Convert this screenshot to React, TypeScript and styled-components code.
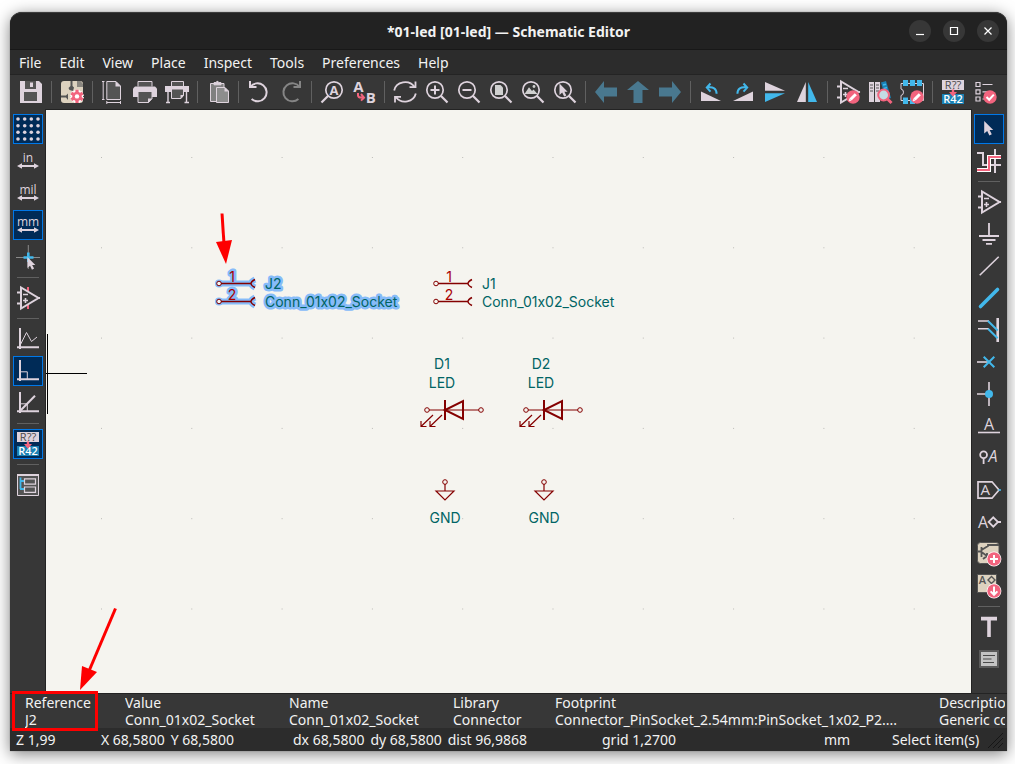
import React from "react";
import styled, { createGlobalStyle, css } from "styled-components";

const c = {
  lilac: "#ded3dd",
  dark: "#545454",
  pink: "#f2647e",
  blue: "#42b8eb",
  deep: "#1a81b4",
  beige: "#ddd2bf",
  arrow: "#49788f",
  wire: "#840000",
  pinText: "#a90000",
  field: "#006464",
  halo: "#86bbf9",
};

const GlobalStyle = createGlobalStyle`
  * { box-sizing: border-box; }
  body {
    margin: 0;
    background: #ffffff;
    font-family: "Noto Sans", "Open Sans", sans-serif;
    font-size: 14px;
    color: #f2f2f2;
  }
`;

/* ---------- window frame ---------- */

const Desktop = styled.div`
  display: flex;
  min-height: 100vh;
  padding: 12px 8px 13px 10px;
  overflow: hidden;
`;

const Window = styled.main`
  flex: 1;
  min-width: 0;
  display: flex;
  flex-direction: column;
  background: #373737;
  border-radius: 12px 12px 0 0;
  box-shadow: 0 0 1px rgba(0, 0, 0, 0.6), 0 3px 16px rgba(0, 0, 0, 0.5);
`;

const TitleBar = styled.header`
  display: grid;
  grid-template-columns: 1fr auto 1fr;
  align-items: center;
  height: 38px;
  padding: 0 8px;
  background: #222222;
  border-top: 1px solid #3c3c3c;
  border-bottom: 1px solid #181818;
  border-radius: 12px 12px 0 0;
`;

const Title = styled.h1`
  grid-column: 2;
  margin: 0;
  font-size: 14px;
  line-height: 22px;
  padding-top: 2px;
  font-weight: 700;
  white-space: nowrap;
`;

const WindowControls = styled.div`
  display: flex;
  justify-content: flex-end;
  gap: 12px;
`;

const RoundButton = styled.button`
  display: grid;
  place-items: center;
  width: 22px;
  height: 22px;
  padding: 0;
  border: 0;
  border-radius: 50%;
  background: #373737;
`;

const MenuBar = styled.nav`
  display: flex;
  align-items: center;
  gap: 18px;
  height: 25px;
  padding: 2px 9px 0;
  background: #2c2c2c;
  border-bottom: 1px solid #242424;
`;

const MenuItem = styled.button`
  padding: 0;
  border: 0;
  background: none;
  color: inherit;
  font: inherit;
  line-height: 20px;
`;

/* ---------- tool bars ---------- */

type Side = "top" | "left" | "right";

const barLayout = {
  top: css`
    height: 34px;
    padding: 1px 5px;
  `,
  left: css`
    flex-direction: column;
    flex: none;
    padding: 4px 1px 0 2px;
  `,
  right: css`
    flex-direction: column;
    flex: none;
    padding: 4px 2px 0 1px;
  `,
};

const ToolBar = styled.div<{ $side: Side }>`
  display: flex;
  ${(p) => barLayout[p.$side]}
`;

const ToolButton = styled.button<{ $active?: boolean }>`
  display: grid;
  place-items: center;
  flex: none;
  width: ${(p) => (p.$active ? 30 : 32)}px;
  height: ${(p) => (p.$active ? 30 : 32)}px;
  margin: ${(p) => (p.$active ? 1 : 0)}px;
  padding: 0;
  border: ${(p) => (p.$active ? "1px solid #0078e8" : "0")};
  background: ${(p) => (p.$active ? "#002b57" : "none")};
`;

const Divider = styled.span<{ $vertical?: boolean }>`
  flex: none;
  align-self: center;
  width: ${(p) => (p.$vertical ? 22 : 1)}px;
  height: ${(p) => (p.$vertical ? 1 : 22)}px;
  margin: ${(p) => (p.$vertical ? "4px 0" : "0 4px")};
  background: #606060;
`;

const IconSvg = styled.svg`
  display: block;
  width: 24px;
  height: 24px;
  overflow: visible;
  fill: none;
  stroke: ${c.lilac};
  stroke-width: 2;
`;

const Glyph = styled.text<{ $size: number; $color?: string; $weight?: number; $italic?: boolean }>`
  font-family: "Open Sans", "Noto Sans", sans-serif;
  font-size: ${(p) => p.$size}px;
  font-weight: ${(p) => p.$weight || 400};
  font-style: ${(p) => (p.$italic ? "italic" : "normal")};
  fill: ${(p) => p.$color || c.lilac};
  stroke: none;
  text-anchor: middle;
`;

/* ---------- work area ---------- */

const Workspace = styled.div`
  flex: 1;
  display: flex;
  min-height: 0;
`;

const Canvas = styled.section`
  flex: 1;
  min-width: 0;
  display: flex;
  background: #f5f4ef;
  border: 1px solid #232323;
  border-bottom: 0;
`;

const Sheet = styled.svg`
  flex: 1;
  width: 100%;
  min-height: 580px;
  fill: none;
  stroke: ${c.wire};
`;

const Field = styled.text<{ $middle?: boolean; $color?: string; $halo?: boolean }>`
  font-family: Inter, Roboto, sans-serif;
  font-size: 14px;
  font-weight: 400;
  font-feature-settings: "calt" 0;
  fill: ${(p) => p.$color || c.field};
  stroke: ${(p) => (p.$halo ? c.halo : "none")};
  stroke-width: 5px;
  stroke-linejoin: round;
  paint-order: stroke;
  text-anchor: ${(p) => (p.$middle ? "middle" : "start")};
`;

/* ---------- bottom panels ---------- */

const MessagePanel = styled.dl`
  position: relative;
  z-index: 1;
  display: grid;
  grid-template-columns: 100px 164px 164px 102px 384px minmax(0, 1fr);
  margin: 0;
  padding: 0 2px 0 15px;
  border-top: 1px solid #232323;
  line-height: 17px;
  white-space: nowrap;
`;

const Message = styled.div`
  overflow: hidden;
`;

const Term = styled.dt`
  margin: 0;
`;

const Value = styled.dd`
  margin: 0;
`;

const Highlight = styled.span`
  position: absolute;
  left: 2px;
  top: -3px;
  width: 86px;
  height: 40px;
  border: 3px solid #fe0000;
`;

const HighlightArrow = styled.svg`
  position: absolute;
  left: 68px;
  bottom: 100%;
  margin-bottom: 3px;
  width: 40px;
  height: 84px;
`;

const StatusBar = styled.footer`
  position: relative;
  display: grid;
  grid-template-columns: 85fr 192fr 309fr 222fr 68fr 110fr;
  align-items: center;
  height: 23px;
  padding: 0 5px 0 6px;
  background: #2c2c2c;
  line-height: 20px;
  white-space: nowrap;
`;

const Status = styled.div`
  display: flex;
  gap: 6px;
  min-width: 0;
`;

const Grip = styled.svg`
  position: absolute;
  right: 3px;
  bottom: 2px;
  width: 18px;
  height: 18px;
  stroke: #161616;
`;

/* ---------- icons ---------- */

const OpAmp = () => (
  <>
    <path d="M5 1.5V22.5L22.5 12ZM1 6.5H5M1 17.5H5M22 12H24" />
    <path d="M7 8.5H12M7 14.5H12M9.5 12V17" strokeWidth="1.6" />
  </>
);

const Badge = ({ children }: { children: React.ReactNode }) => (
  <>
    <circle cx="17" cy="17" r="6.7" fill={c.pink} stroke="none" />
    <g stroke="#fff" strokeWidth="2">{children}</g>
  </>
);

const Pencil = () => (
  <Badge>
    <path d="M14.5 19.5L19.8 14.2" strokeWidth="3" />
    <path d="M13 21L15 20.4L13.6 19Z" strokeWidth="0.6" fill="#fff" />
  </Badge>
);

const Lens = ({ children }: { children: React.ReactNode }) => (
  <>
    <circle cx="10" cy="10" r="8.2" strokeWidth="1.7" />
    <path d="M15.8 15.8L22.5 22.5" strokeWidth="2.2" />
    {children}
  </>
);

const Cursor = () => (
  <path d="M0 0V12.6L3 10L5.2 14.4L7.6 13.2L5.4 9H9Z" fill={c.lilac} stroke="none" />
);

const Axes = () => <path d="M4 1V22M1 20.2H23" />;

const Unit = ({ label }: { label: string }) => (
  <>
    <Glyph x="12" y="12.5" $size={12} $weight={500}>{label}</Glyph>
    <path d="M3 17H21" strokeWidth="2" />
    <path d="M1 17L6 14.2V19.8ZM23 17L18 14.2V19.8Z" fill={c.lilac} stroke="none" />
  </>
);

const teeth = "M17 9.8V23M11.3 13.1L22.7 19.7M11.3 19.7L22.7 13.1";

const icons: Record<string, React.ReactNode> = {
  save: (
    <g stroke="none">
      <path d="M1 1H20L23 4V23H1Z" fill={c.lilac} />
      <path d="M6 1H17V9H6ZM5 12H18V21H5Z" fill={c.dark} />
      <path d="M11 2.5H14V7H11Z" fill={c.lilac} />
    </g>
  ),
  setup: (
    <g stroke="none">
      <rect x="1" y="1" width="22" height="22" rx="3" fill={c.beige} />
      <path d="M17 1H20.5L23 4V7H17Z" fill="#8a8780" />
      <path d="M10.5 1H12.5V6L14 7.5L13 11L9.5 10L8.5 8L10.5 6ZM1 15.5H6L8 13.5V20L6 17.5H1Z" fill={c.dark} />
      <path d={teeth} stroke="#fff" strokeWidth="5.4" />
      <circle cx="17" cy="16.4" r="6" fill="#fff" />
      <path d={teeth} stroke={c.pink} strokeWidth="3.2" />
      <circle cx="17" cy="16.4" r="4.7" fill={c.pink} />
      <circle cx="17" cy="16.4" r="2.2" fill="#fff" />
    </g>
  ),
  page: (
    <g strokeWidth="1">
      <path d="M5.8 1.5H15L19.5 6V19.5H5.8Z" fill={c.dark} />
      <path d="M14.5 1V6.5H20Z" fill={c.lilac} stroke="none" />
      <path d="M2.2 1.5V19.5M1 1.5H3.5M1 19.5H3.5M5.8 22.5H19.5M5.8 21V24M19.5 21V24" />
    </g>
  ),
  print: (
    <g>
      <path d="M5 6.5V1.5H19V6.5" fill={c.dark} strokeWidth="1" />
      <path d="M2 6.5H22L24 8.5V17H0V8.5Z" fill={c.lilac} stroke="none" />
      <path d="M5 11.5H19V18.5L15.5 22.5H5Z" fill={c.dark} strokeWidth="1" />
      <path d="M15 23V18.5H19.5Z" fill={c.lilac} stroke="none" />
    </g>
  ),
  plot: (
    <g>
      <path d="M6.5 6.5V1.5H18.5V6.5" fill={c.dark} strokeWidth="1" />
      <rect y="6" width="24" height="6" fill={c.lilac} stroke="none" />
      <path d="M6.5 9H18.5V15.5L16 18.5H6.5Z" fill={c.dark} strokeWidth="1" />
      <path d="M15.5 19V15H19Z" fill={c.lilac} stroke="none" />
      <path d="M3 12V22M21.5 12V22M1 22.5H5M19.5 22.5H24" strokeWidth="1.4" />
    </g>
  ),
  paste: (
    <g strokeWidth="1">
      <path d="M4.5 3.5H18V21.5H4.5Z" fill="#808080" />
      <path d="M8 4.8V2.6H10L10.8 1.4H12L12.8 2.6H15V4.8Z" fill={c.lilac} />
      <path d="M10.5 7.5H19L22.5 11V22.5H10.5Z" fill="#8d8d8d" />
      <path d="M18.5 7V11.5H23Z" fill={c.lilac} stroke="none" />
    </g>
  ),
  undo: <path d="M3 1V7H9.5M3.3 7A9 9 0 1 1 4.6 19" />,
  redo: <path d="M21 1V7H14.5M20.7 7A9 9 0 1 0 19.4 19" stroke="#858585" />,
  find: (
    <>
      <circle cx="14" cy="10" r="8.2" strokeWidth="1.7" />
      <path d="M8.2 15.8L1.5 22.5" strokeWidth="2.2" />
      <Glyph x="14" y="14.6" $size={13} $weight={700}>A</Glyph>
    </>
  ),
  replace: (
    <>
      <Glyph x="6.5" y="11.6" $size={15} $weight={700}>A</Glyph>
      <Glyph x="18.8" y="23" $size={15} $weight={700}>B</Glyph>
      <path d="M6 13V15.5Q6.4 17.6 9 17.6H11.5M9 14L12 17.6L9 20.6" stroke={c.pink} />
    </>
  ),
  refresh: (
    <path d="M1.2 10.5A11 10 0 0 1 21.5 7M22.5 1.5V7.2H16.5M22.8 13.5A11 10 0 0 1 3 17.2M2 22.5V16.8H8" strokeWidth="1.8" />
  ),
  zoomIn: <Lens><path d="M10 5.5V14.5M5.5 10H14.5" /></Lens>,
  zoomOut: <Lens><path d="M5.5 10H14.5" /></Lens>,
  zoomFit: <Lens><path d="M6 5H11.5L14 7.5V15H6Z" fill="#d0d0d0" stroke="none" /></Lens>,
  zoomObjects: (
    <Lens>
      <path d="M3.5 14L8 7.2L11 11L12.5 9.5L16.5 14Z" fill="#d0d0d0" stroke="none" />
      <circle cx="13" cy="6.5" r="1.4" fill="#d0d0d0" stroke="none" />
    </Lens>
  ),
  zoomSelection: <Lens><g transform="translate(6.5 3.6) scale(0.9)"><Cursor /></g></Lens>,
  left: <path d="M1 12L10 1V7.5H23V16.5H10V23Z" fill={c.arrow} stroke="none" />,
  up: <path d="M12 1L23 10H16.5V23H7.5V10H1Z" fill={c.arrow} stroke="none" />,
  right: <path d="M23 12L14 1V7.5H1V16.5H14V23Z" fill={c.arrow} stroke="none" />,
  rotateLeft: (
    <>
      <path d="M2 11.5L22 21H2Z" fill={c.lilac} stroke="none" />
      <path d="M8 7.6Q17.5 6 17.6 13.8M11.5 3.5L7.8 7.6L11.5 11.6" stroke={c.blue} />
    </>
  ),
  rotateRight: (
    <>
      <path d="M22 11.5L2 21H22Z" fill={c.lilac} stroke="none" />
      <path d="M16 7.6Q6.5 6 6.4 13.8M12.5 3.5L16.2 7.6L12.5 11.6" stroke={c.blue} />
    </>
  ),
  mirrorV: (
    <g stroke="none">
      <path d="M2 2L22 10.8H2Z" fill={c.lilac} />
      <path d="M2 22L22 13.2H2Z" fill={c.blue} />
    </g>
  ),
  mirrorH: (
    <g stroke="none">
      <path d="M2 22L10.8 2V22Z" fill={c.lilac} />
      <path d="M22 22L13.2 2V22Z" fill={c.blue} />
    </g>
  ),
  symbolEditor: <><OpAmp /><Pencil /></>,
  library: (
    <>
      <path d="M1 2H6V22H1ZM7 2H12V22H7Z" fill={c.lilac} stroke="none" />
      <path d="M2 5H5M2 8H5M2 11H5M8 5H11M8 8H11M8 11H11" stroke={c.dark} strokeWidth="1" />
      <path d="M13 2.5L18 1L23 18L18 20Z" fill={c.deep} stroke="none" />
      <path d="M15 5L18 4.2M16 8.5L19 7.5" stroke={c.blue} strokeWidth="1.4" />
      <path d="M19 18.5L23.5 23" stroke={c.pink} strokeWidth="3" />
      <circle cx="15.6" cy="15" r="5.4" fill="#c4dbe4" stroke={c.pink} strokeWidth="2" />
    </>
  ),
  footprintEditor: (
    <>
      <path d="M1 3.5H23.5V20.5H1V15.5Q3.5 15 3.5 12.2Q3.5 9.5 1 9Z" strokeWidth="1" />
      <path d="M3 0H8V6H3ZM10 0H15V6H10ZM17 0H22V6H17ZM3 17.5H8V24H3ZM10 17.5H15V24H10Z" fill={c.blue} stroke="none" />
      <Pencil />
    </>
  ),
  annotate: (
    <>
      <path d="M1 0H23V10H1Z" fill={c.lilac} stroke="none" />
      <path d="M1 14H23V24H1Z" fill={c.deep} stroke="none" />
      <Glyph x="12" y="9" $size={11} $weight={500} $color="#4a4a4a">R??</Glyph>
      <Glyph x="12" y="23" $size={11} $weight={600} $color="#ffffff">R42</Glyph>
      <path d="M10.8 9.5H13.2V12H16L12 16.8L8 12H10.8Z" fill={c.pink} stroke="none" />
    </>
  ),
  erc: (
    <>
      <path d="M3 2.5H7V6.5H3ZM3 9.8H7V13.8H3ZM3 17H7V21H3ZM9.5 4.5H19.5M9.5 11.8H14M9.5 19H11" strokeWidth="1.2" />
      <Badge><path d="M13.5 17L16.2 19.7L20.8 14.6" /></Badge>
    </>
  ),
  grid: (
    <g fill={c.lilac} stroke="none">
      {[2, 8.7, 15.3, 22].map((x) => [2, 8.7, 15.3, 22].map((y) => <circle key={`${x}-${y}`} cx={x} cy={y} r="1.8" />))}
    </g>
  ),
  inches: <Unit label="in" />,
  mils: <Unit label="mil" />,
  millimetres: <Unit label="mm" />,
  crosshair: (
    <>
      <path d="M12.3 0V24M0 12.5H24" stroke="#8a8a8a" strokeWidth="1" />
      <path d="M12.3 7.5V17M7.5 12.5H17.5" stroke={c.blue} strokeWidth="2.6" />
      <g transform="translate(11.4 12) scale(0.88)"><Cursor /></g>
    </>
  ),
  hiddenPins: (
    <>
      <path d="M12 1V6M12 18V23" stroke={c.pink} />
      <OpAmp />
    </>
  ),
  freeAngle: <><Axes /><path d="M4 18.5L10.5 5.5L15.5 14.5L21 10" strokeWidth="1" /></>,
  rightAngle: <><Axes /><path d="M4 12.8H11.3V20" strokeWidth="1" /></>,
  halfAngle: <><Axes /><path d="M4 12.8H11.3V20" strokeWidth="1" /><path d="M4 20L19 4.7" /></>,
  hierarchy: (
    <>
      <path d="M1.5 1.5H22.5V22.5H1.5Z" fill={c.dark} strokeWidth="1" />
      <path d="M1 1H23V3H1Z" fill={c.lilac} stroke="none" />
      <path d="M4.5 4.5V16M4 8H8M4 16H8" stroke={c.blue} strokeWidth="1.8" />
      <path d="M8.5 5.8H19.5V11.2H8.5ZM8.5 14H19.5V19.4H8.5Z" strokeWidth="1.2" />
    </>
  ),
  select: <g transform="translate(7.2 4)"><Cursor /></g>,
  net: (
    <>
      <path d="M0 4H6V16H24M18 0V24" />
      <path d="M0 21H12V8H24" stroke="#fff" strokeWidth="4" />
      <path d="M0 21H12V8H24" stroke={c.pink} />
    </>
  ),
  symbol: <OpAmp />,
  power: <path d="M12 1V14M2 14H22M5.5 18H18.5M9 21.8H15" strokeWidth="1.8" />,
  wire: <path d="M2.7 21.3L21.7 2.7" strokeWidth="1.6" />,
  bus: <path d="M3.5 20.5L20.5 3.5" stroke={c.blue} strokeWidth="3.6" strokeLinecap="round" />,
  busEntry: (
    <>
      <path d="M20.7 0V24" strokeWidth="2.6" />
      <path d="M1 3H12M1 10.8H12" strokeWidth="1.6" />
      <path d="M11 3L20.7 12.5M11 10.8L20.7 20.3" stroke={c.blue} />
    </>
  ),
  noConnect: (
    <>
      <path d="M0 12H12" strokeWidth="1.6" />
      <path d="M6.7 6.7L17.3 17.3M17.3 6.7L6.7 17.3" stroke={c.blue} />
    </>
  ),
  junction: (
    <>
      <path d="M0 12H12M12 0V24" strokeWidth="1.6" />
      <circle cx="12" cy="12" r="4" fill={c.blue} stroke="none" />
    </>
  ),
  label: <><Glyph x="12" y="15.6" $size={16}>A</Glyph><path d="M1 18.5H23" strokeWidth="1.6" /></>,
  directive: (
    <>
      <circle cx="6.6" cy="8.8" r="3.4" strokeWidth="1.8" />
      <path d="M6.6 12.5V18" strokeWidth="1.8" />
      <Glyph x="16" y="16" $size={16} $italic>A</Glyph>
    </>
  ),
  globalLabel: (
    <>
      <path d="M1 3.8H15L22 12L15 20.2H1Z" strokeWidth="1.7" />
      <path d="M21.5 12H24" stroke={c.blue} strokeWidth="1.6" />
      <Glyph x="8.3" y="17" $size={15}>A</Glyph>
    </>
  ),
  hierLabel: (
    <>
      <Glyph x="6" y="17.8" $size={16}>A</Glyph>
      <path d="M16.3 7.3L21 12L16.3 16.7L11.6 12ZM21 12H24" strokeWidth="1.8" />
    </>
  ),
  addSheet: (
    <>
      <rect x="0.5" y="0.5" width="21.5" height="21" rx="3" fill={c.beige} stroke={c.dark} strokeWidth="1" />
      <path d="M0 9.5H4.5M4.5 5V15M4.5 8L11 4V3H22M4.5 10L10 14M6 17L10 14V11" stroke={c.dark} strokeWidth="1.8" />
      <circle cx="17" cy="17" r="7.4" fill="#fff" stroke="none" />
      <Badge><path d="M17 13V21M13 17H21" /></Badge>
    </>
  ),
  importLabel: (
    <>
      <rect x="0.5" y="0.5" width="19" height="18" fill={c.beige} stroke={c.dark} strokeWidth="1" />
      <Glyph x="5.5" y="10" $size={11} $weight={600} $color={c.dark}>A</Glyph>
      <path d="M14.5 2.5L18 6L14.5 9.5L11 6Z" stroke={c.dark} strokeWidth="1.4" />
      <circle cx="17" cy="17" r="7.4" fill="#fff" stroke="none" />
      <Badge><path d="M17 12.6V20.6M13.6 17.4L17 20.8L20.4 17.4" /></Badge>
    </>
  ),
  text: <path d="M4 3.6H20M12 3.6V22" strokeWidth="3.6" />,
  textBox: (
    <>
      <rect x="3" y="4" width="18" height="16" fill="#c3c3c3" stroke="#5a5a5a" />
      <path d="M6 8.5H18M6 12H14.5M6 15.5H17" stroke="#4a4a4a" strokeWidth="1.2" />
    </>
  ),
};

type Tool = { icon: string; name: string; active?: boolean } | null;
const t = (icon: string, name: string, active?: boolean): Tool => ({ icon, name, active });

const topTools: Tool[] = [
  t("save", "Save"), null, t("setup", "Schematic setup"), null,
  t("page", "Page settings"), t("print", "Print"), t("plot", "Plot"), null,
  t("paste", "Paste"), null, t("undo", "Undo"), t("redo", "Redo"), null,
  t("find", "Find"), t("replace", "Find and replace"), null,
  t("refresh", "Refresh"), t("zoomIn", "Zoom in"), t("zoomOut", "Zoom out"), t("zoomFit", "Zoom to fit"),
  t("zoomObjects", "Zoom to objects"), t("zoomSelection", "Zoom to selection"), null,
  t("left", "Navigate back"), t("up", "Navigate up"), t("right", "Navigate forward"), null,
  t("rotateLeft", "Rotate counterclockwise"), t("rotateRight", "Rotate clockwise"),
  t("mirrorV", "Mirror vertically"), t("mirrorH", "Mirror horizontally"), null,
  t("symbolEditor", "Symbol editor"), t("library", "Symbol library browser"), t("footprintEditor", "Footprint editor"), null,
  t("annotate", "Annotate"), t("erc", "Electrical rules checker"),
];

const leftTools: Tool[] = [
  t("grid", "Show grid", true), t("inches", "Inches"), t("mils", "Mils"), t("millimetres", "Millimetres", true),
  t("crosshair", "Full-window crosshairs"), null, t("hiddenPins", "Show hidden pins"), null,
  t("freeAngle", "Free angle lines"), t("rightAngle", "Right angle lines", true), t("halfAngle", "45 degree lines"), null,
  t("annotate", "Annotate automatically", true), null, t("hierarchy", "Hierarchy navigator"),
];

const rightTools: Tool[] = [
  t("select", "Select", true), t("net", "Highlight net"), null,
  t("symbol", "Add symbol"), t("power", "Add power"), t("wire", "Add wire"), t("bus", "Add bus"),
  t("busEntry", "Add bus entry"), t("noConnect", "Add no connect"), t("junction", "Add junction"),
  t("label", "Add label"), t("directive", "Add net class directive"), t("globalLabel", "Add global label"),
  t("hierLabel", "Add hierarchical label"), t("addSheet", "Add sheet"), t("importLabel", "Import sheet pin"), null,
  t("text", "Add text"), t("textBox", "Add text box"),
];

const Tools = ({ items, label, side }: { items: Tool[]; label: string; side: Side }) => (
  <ToolBar role="toolbar" aria-label={label} $side={side}>
    {items.map((tool, i) =>
      tool ? (
        <ToolButton key={tool.icon} type="button" aria-label={tool.name} aria-pressed={tool.active} $active={tool.active}>
          <IconSvg viewBox="0 0 24 24" aria-hidden="true">{icons[tool.icon]}</IconSvg>
        </ToolButton>
      ) : (
        <Divider key={i} $vertical={side !== "top"} />
      )
    )}
  </ToolBar>
);

/* ---------- schematic symbols ---------- */

const pinPath = "M2 0H32M36 -4Q28 0 36 4";

const Connector = ({ x, y, name, selected }: { x: number; y: number; name: string; selected?: boolean }) => (
  <g transform={`translate(${x} ${y})`}>
    {[0, 18].map((dy, i) => (
      <g key={dy} transform={`translate(0 ${dy})`}>
        {selected && <path d={pinPath} stroke={c.halo} strokeWidth="6" />}
        {selected && <circle r="3" stroke={c.halo} strokeWidth="2" />}
        <Field x="13" y="-2" $middle $color={c.pinText} $halo={selected}>{i + 1}</Field>
        <path d={pinPath} strokeWidth="1.4" />
        <circle r="2.3" strokeWidth="1" />
      </g>
    ))}
    <Field x="46" y="5" $halo={selected}>{name}</Field>
    <Field x="46" y="23" $halo={selected}>Conn_01x02_Socket</Field>
  </g>
);

const Led = ({ x, y, name }: { x: number; y: number; name: string }) => (
  <g transform={`translate(${x} ${y})`}>
    <Field x="-3" y="-41" $middle>{name}</Field>
    <Field x="-3" y="-22" $middle>LED</Field>
    <circle cx="-18" r="2.3" />
    <circle cx="36" r="2.3" />
    <path d="M-16 0H34" strokeWidth="1.2" />
    <path d="M0 -10V10M18 -9V9L0 0Z" strokeWidth="2" />
    <path d="M-12 5L-24 16.5M-24 11V16.5H-18.5M-3 5L-15 16.5M-15 11V16.5H-9.5" strokeWidth="1.2" />
  </g>
);

const Ground = ({ x, y }: { x: number; y: number }) => (
  <g transform={`translate(${x} ${y})`}>
    <circle r="2.3" />
    <path d="M0 2V9M-9 9H9L0 18Z" strokeWidth="1.2" />
    <Field x="0" y="41" $middle>GND</Field>
  </g>
);

const Schematic = () => (
  <Sheet role="img" aria-label="Schematic sheet">
    <defs>
      <pattern id="grid-dots" x="54" y="46" width="90.3" height="90.3" patternUnits="userSpaceOnUse">
        <rect x="1" y="1" width="1" height="1" fill="#b9b8b4" stroke="none" />
      </pattern>
    </defs>
    <rect width="100%" height="100%" fill="url(#grid-dots)" stroke="none" />
    <path d="M1.5 224V304M0 263.5H41" stroke="#000" strokeWidth="1" />
    <Connector x={173} y={173.5} name="J2" selected />
    <Connector x={390} y={173.5} name="J1" />
    <Led x={399} y={300} name="D1" />
    <Led x={498} y={300} name="D2" />
    <Ground x={399} y={372} />
    <Ground x={498} y={372} />
    <path d="M176 103.5L178 134" stroke="#fe0000" strokeWidth="3" />
    <path d="M170 132L186 130L180 154Z" fill="#fe0000" stroke="none" />
  </Sheet>
);

const messages = [
  ["Reference", "J2"],
  ["Value", "Conn_01x02_Socket"],
  ["Name", "Conn_01x02_Socket"],
  ["Library", "Connector"],
  ["Footprint", "Connector_PinSocket_2.54mm:PinSocket_1x02_P2...."],
  ["Description", "Generic connector"],
];

const statuses = [
  ["Z 1,99"],
  ["X 68,5800", "Y 68,5800"],
  ["dx 68,5800", "dy 68,5800", "dist 96,9868"],
  ["grid 1,2700"],
  ["mm"],
  ["Select item(s)"],
];

const menus = ["File", "Edit", "View", "Place", "Inspect", "Tools", "Preferences", "Help"];

export default function App() {
  return (
    <Desktop>
      <GlobalStyle />
      <Window>
        <TitleBar>
          <Title>*01-led [01-led] — Schematic Editor</Title>
          <WindowControls>
            {[
              ["Minimize", "M1 8.5H9"],
              ["Maximize", "M1.5 1.5H8.5V8.5H1.5Z"],
              ["Close", "M1.5 1.5L8.5 8.5M8.5 1.5L1.5 8.5"],
            ].map(([name, d]) => (
              <RoundButton key={name} type="button" aria-label={name}>
                <svg width="10" height="10" fill="none" stroke="#fff" strokeWidth="1.2"><path d={d} /></svg>
              </RoundButton>
            ))}
          </WindowControls>
        </TitleBar>
        <MenuBar aria-label="Main menu">
          {menus.map((m) => <MenuItem key={m} type="button">{m}</MenuItem>)}
        </MenuBar>
        <Tools items={topTools} label="Main tools" side="top" />
        <Workspace>
          <Tools items={leftTools} label="Display options" side="left" />
          <Canvas><Schematic /></Canvas>
          <Tools items={rightTools} label="Drawing tools" side="right" />
        </Workspace>
        <MessagePanel>
          {messages.map(([term, value]) => (
            <Message key={term}>
              <Term>{term}</Term>
              <Value>{value}</Value>
            </Message>
          ))}
          <Highlight aria-hidden="true" />
          <HighlightArrow viewBox="0 0 40 84" aria-hidden="true">
            <path d="M37.5 1.5L11 64" stroke="#fe0000" strokeWidth="3" />
            <path d="M4 59L19 65L2 83Z" fill="#fe0000" />
          </HighlightArrow>
        </MessagePanel>
        <StatusBar>
          {statuses.map((parts) => (
            <Status key={parts[0]}>{parts.map((p) => <span key={p}>{p}</span>)}</Status>
          ))}
          <Grip viewBox="0 0 18 18" aria-hidden="true"><path d="M2 17L17 2M7 17L17 7M12 17L17 12" /></Grip>
        </StatusBar>
      </Window>
    </Desktop>
  );
}
